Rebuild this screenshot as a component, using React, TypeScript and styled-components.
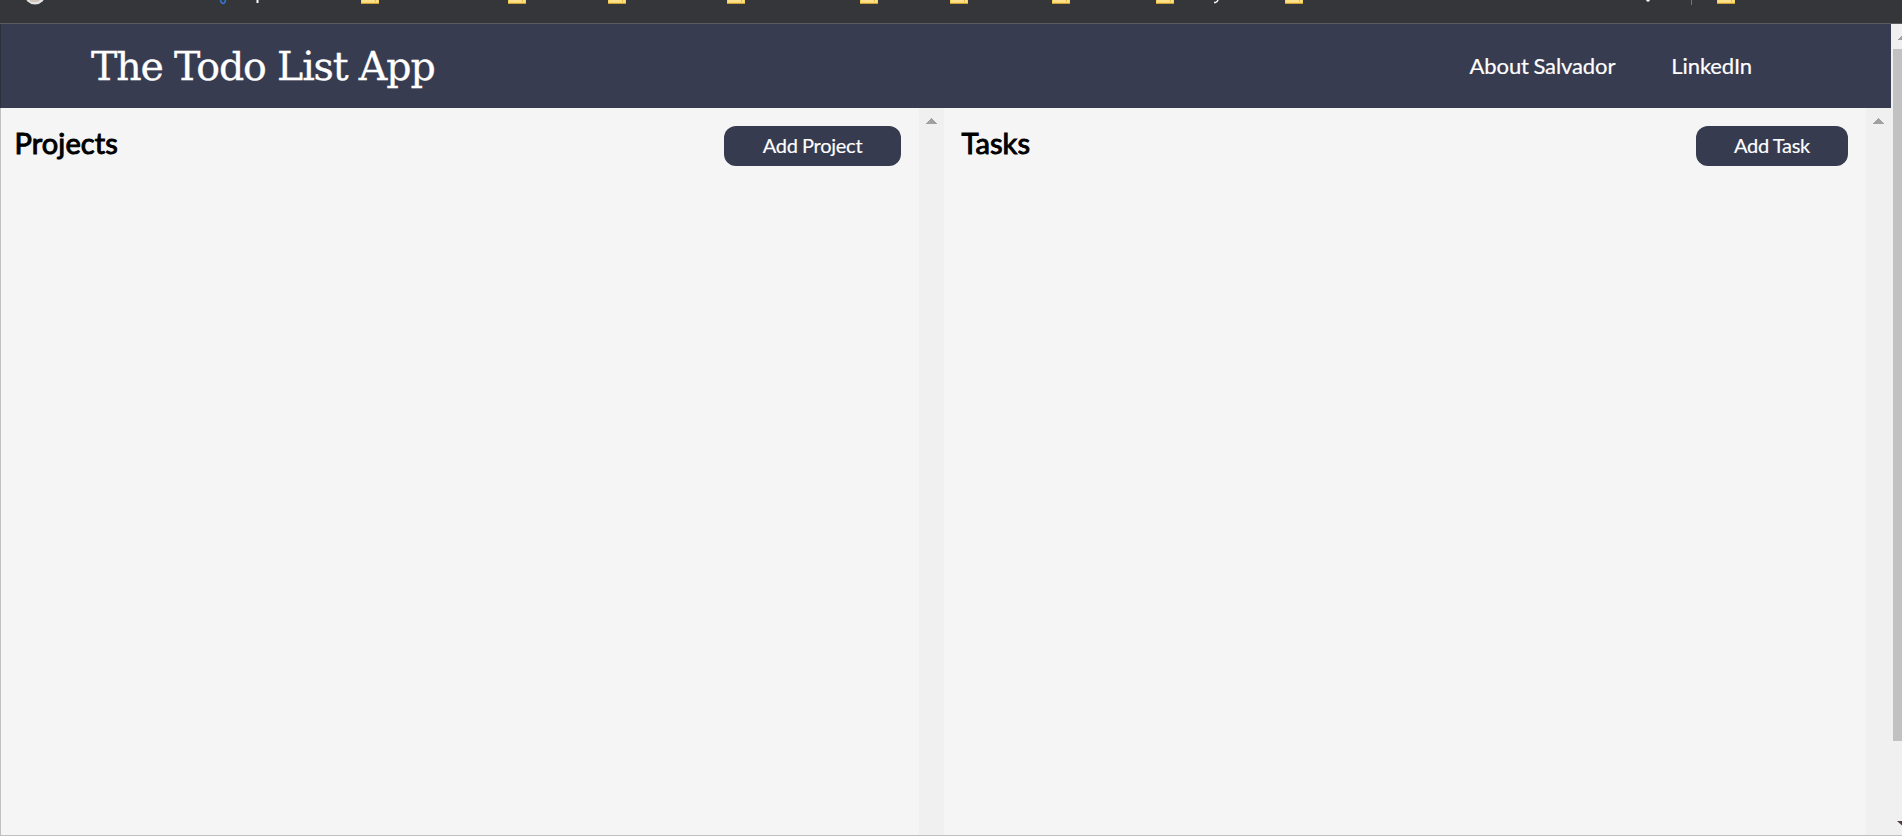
import React from 'react';
import styled, { createGlobalStyle } from 'styled-components';

const GlobalStyle = createGlobalStyle`
  *, *::before, *::after { box-sizing: border-box; }
  body { margin: 0; overflow: hidden; background: #f5f5f5; }
`;

const Screen = styled.div`
  width: 1902px;
  height: 836px;
  display: flex;
  flex-direction: column;
  overflow: hidden;
  font-family: Lato, sans-serif;
`;

const BookmarkBar = styled.div`
  height: 24px;
  flex: none;
  background: #35363a;
  border-bottom: 1px solid #5b5c62;
  svg { display: block; }
`;

const Viewport = styled.div`
  flex: 1;
  min-height: 0;
  display: flex;
  border-left: 1px solid #c0c0c0;
  border-bottom: 1px solid #c0c0c0;
`;

const Page = styled.div`
  width: 1890px;
  display: flex;
  flex-direction: column;
`;

const Header = styled.header`
  height: 84px;
  flex: none;
  display: flex;
  align-items: center;
  justify-content: space-between;
  margin-left: -1px;
  padding: 0 139px 0 90px;
  background: #383c50;
  border-left: 1px solid #2e3040;
  color: #fff;
`;

const Brand = styled.h1`
  margin: 0;
  font: 400 39.5px/50px 'DejaVu Serif', serif;
  letter-spacing: -1.15px;
  -webkit-text-stroke: 0.3px #fff;
  white-space: nowrap;
`;

const Nav = styled.nav`
  display: flex;
  gap: 56px;
`;

const NavLink = styled.a`
  font-size: 22px;
  line-height: 28px;
  word-spacing: -1px;
  letter-spacing: -0.1px;
  -webkit-text-stroke: 0.2px #fff;
  color: #fff;
  white-space: nowrap;
`;

const Columns = styled.main`
  flex: 1;
  min-height: 0;
  display: grid;
  grid-template-columns: 943px 947px;
`;

const Panel = styled.section`
  display: flex;
  background: #f5f5f5;
`;

const PanelHead = styled.div<{ $left: number }>`
  flex: 1;
  height: 76px;
  display: flex;
  align-items: flex-start;
  justify-content: space-between;
  padding: 18px 18px 0 ${(p) => p.$left}px;
`;

const PanelTitle = styled.h2`
  margin: 0;
  font-size: 29px;
  line-height: 34px;
  font-weight: 400;
  letter-spacing: 0.1px;
  -webkit-text-stroke: 1px #000;
  color: #000;
`;

const AddButton = styled.button<{ $width: number }>`
  width: ${(p) => p.$width}px;
  height: 40px;
  padding: 0 0 2px;
  border: 0;
  border-radius: 12px;
  background: #363b50;
  color: #fff;
  font: 400 20px/38px Lato, sans-serif;
  letter-spacing: -0.25px;
  word-spacing: -0.5px;
  -webkit-text-stroke: 0.15px #fff;
`;

const PanelTrack = styled.div`
  width: 25px;
  padding: 10px 0 0 7px;
  background: #f0f0f0;
  svg { display: block; }
`;

const PageTrack = styled.div`
  width: 11px;
  display: flex;
  flex-direction: column;
  background: #f0f0f0;
  svg { display: block; flex: none; }
`;

const Thumb = styled.div`
  height: 692px;
  margin-left: 2px;
  flex: none;
  background: #c1c1c1;
`;

const folders = [361, 508, 608, 727, 860, 950, 1052, 1156, 1285, 1717];

const Bookmarks = () => (
  <svg width="1902" height="23" viewBox="0 0 1902 23">
    <circle cx="35" cy="-6" r="10.5" fill="#e4e4e6" />
    <path d="M29 0h11l-2 2h-7z" fill="#d2c5b8" />
    <path d="M220.5 0 Q221 3.5 223 3.5 Q225 3.5 225.5 0" fill="none" stroke="#3275d0" strokeWidth="1.6" />
    <path d="M257.5 0v3" stroke="#fff" strokeWidth="2" />
    {folders.map((x) => (
      <g key={x}>
        <rect x={x} y="0" width="18" height="4" fill="#c9a03a" />
        <rect x={x} y="0" width="18" height="3" fill="#f5d455" />
        <rect x={x + 1} y="0" width="16" height="2.5" fill="#ffe08a" />
        <rect x={x + 14} y="0" width="1" height="2" fill="#e8bd45" />
      </g>
    ))}
    <path d="M1214 2.5h1.5q1.5 0 2.5-2.5" fill="none" stroke="#fff" strokeWidth="1.5" />
    <circle cx="1648" cy="0" r="1.8" fill="#fff" />
    <path d="M1691.5 0v5" stroke="#747579" />
  </svg>
);

const UpArrow = () => (
  <svg width="12" height="6" viewBox="0 0 12 6" shapeRendering="crispEdges">
    <path d="M0 6 L5.5 0 L11 6z" fill="#a3a0a0" />
  </svg>
);

function Column({ title, action, buttonWidth, left }: { title: string; action: string; buttonWidth: number; left: number }) {
  return (
    <Panel>
      <PanelHead $left={left}>
        <PanelTitle>{title}</PanelTitle>
        <AddButton $width={buttonWidth}>{action}</AddButton>
      </PanelHead>
      <PanelTrack><UpArrow /></PanelTrack>
    </Panel>
  );
}

export default function App() {
  return (
    <Screen>
      <GlobalStyle />
      <BookmarkBar><Bookmarks /></BookmarkBar>
      <Viewport>
        <Page>
          <Header>
            <Brand>The Todo List App</Brand>
            <Nav>
              <NavLink>About Salvador</NavLink>
              <NavLink>LinkedIn</NavLink>
            </Nav>
          </Header>
          <Columns>
            <Column title="Projects" action="Add Project" buttonWidth={177} left={13.5} />
            <Column title="Tasks" action="Add Task" buttonWidth={152} left={17.5} />
          </Columns>
        </Page>
        <PageTrack>
          <svg width="11" height="25" viewBox="0 0 11 25" shapeRendering="crispEdges">
            <path d="M6 16 L11 11 V16z" fill="#a3a0a0" />
          </svg>
          <Thumb />
          <svg width="11" height="94" viewBox="0 0 11 94">
            <path d="M6 80 H11 V84.5z" fill="#513c4e" />
          </svg>
        </PageTrack>
      </Viewport>
    </Screen>
  );
}
